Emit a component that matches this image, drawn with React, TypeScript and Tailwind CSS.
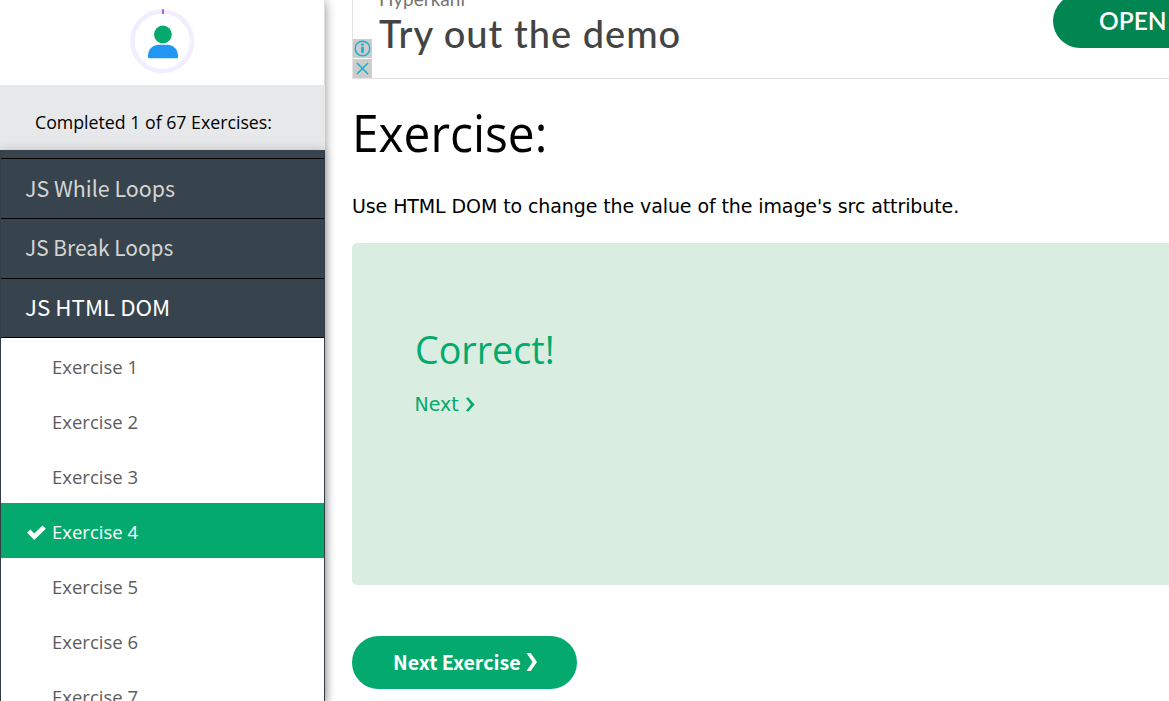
import type { ReactNode } from "react";

const sections = [
  { title: "JS While Loops", tone: "text-[#d5d5d5]", row: "h-[60px] pb-[2px]", scale: "scale-x-[0.974]" },
  { title: "JS Break Loops", tone: "text-[#d5d5d5]", row: "h-[60px] pb-[4px]", scale: "scale-x-[0.95]" },
  { title: "JS HTML DOM", tone: "text-white", row: "h-[59px] pb-[3px]", scale: "scale-x-[1.015]" },
];
const exercises = [1, 2, 3, 4, 5, 6, 7];

function Narrow({ children, className }: { children: ReactNode; className: string }) {
  return <span className={`inline-block origin-left whitespace-nowrap ${className}`}>{children}</span>;
}

function Chevron({ className, bold }: { className: string; bold?: boolean }) {
  return (
    <svg viewBox="0 0 11 18" className={className} fill="currentColor">
      <path d={bold ? "M0 0h4.200l6.300 9-6.300 9H0l6-9z" : "M0 1.500L2.500 0l8 9-8 9L0 16.500 6 9z"} />
    </svg>
  );
}

function Avatar() {
  return (
    <svg viewBox="0 0 66 66" className="h-[66px] w-[66px]">
      <circle cx="33.2" cy="33.3" r="29.8" fill="none" stroke="#f3eeff" strokeWidth="4.6" />
      <path d="M34 1.300v4.800" stroke="#9766f3" strokeWidth="2" />
      <circle cx="33.9" cy="26.500" r="8.900" fill="#04aa6d" />
      <path d="M19 49v-1c0-7 5-11.200 11-11.200h8c6 0 11 4.200 11 11.200v1q0 1.300-1.300 1.300H20.300q-1.300 0-1.300-1.300z" fill="#2196f3" />
    </svg>
  );
}

function Sidebar() {
  return (
    <aside className="relative z-10 flex w-[325px] shrink-0 flex-col bg-[#38444d] font-['Open_Sans',sans-serif] shadow-[0_2px_10px_rgba(0,0,0,0.45)]">
      <div className="flex h-[85px] shrink-0 justify-center border-r border-[#dedede] bg-white pt-2 pr-px">
        <Avatar />
      </div>
      <div className="flex h-[65px] shrink-0 items-center bg-[#e7e8ea] pt-[9px] pl-[35px] text-[18px] text-black">
        <Narrow className="scale-x-[0.985]">Completed 1 of 67 Exercises:</Narrow>
      </div>
      <nav className="mx-px flex flex-col pt-2 shadow-[0_0_10px_rgba(0,0,0,0.2)]">
        {sections.map((s) => (
          <div
            key={s.title}
            className={`flex shrink-0 items-center border-t border-black pl-[24px] font-['Noto_Sans_CJK_SC',sans-serif] text-[22px] ${s.row} ${s.tone}`}
          >
            <Narrow className={s.scale}>{s.title}</Narrow>
          </div>
        ))}
        <ul className="border-t border-black bg-white">
          {exercises.map((n) => (
            <li
              key={n}
              className={`flex h-[55px] items-center pt-[3px] text-[18.5px] ${n === 4 ? "bg-[#04aa6d] text-white" : "text-[#5c5c5c]"}`}
            >
              <span className="flex w-[51px] pl-[26px]">
                {n === 4 && (
                  <svg viewBox="0 0 19 15" className="h-[15px] w-[19px]" fill="none" stroke="currentColor" strokeWidth="4.600">
                    <path d="M1.700 6.200l5.500 5.500L17.200 2.100" strokeLinejoin="miter" />
                  </svg>
                )}
              </span>
              <span className="whitespace-nowrap">Exercise {n}</span>
            </li>
          ))}
        </ul>
      </nav>
    </aside>
  );
}

function AdBanner() {
  return (
    <div className="flex h-[79px] shrink-0 border-b border-l border-[#e3e3e3]">
      <div className="flex w-[19px] shrink-0 flex-col gap-px pt-[39px] text-[#0fb2d3]">
        <span className="flex h-[19px] items-center justify-center bg-[#cccccc]">
          <svg viewBox="0 0 19 19" className="h-[19px] w-[19px]" fill="none" stroke="currentColor">
            <circle cx="9.500" cy="9.500" r="7.300" strokeWidth="1.400" />
            <path d="M9.500 7.800v6M9.500 4.500v2" strokeWidth="2.600" />
          </svg>
        </span>
        <span className="flex h-[19px] items-center justify-center bg-[#cccccc]">
          <svg viewBox="0 0 19 19" className="h-[19px] w-[19px]" fill="none" stroke="currentColor" strokeWidth="1.500">
            <path d="M4 4l11 11M15 4L4 15" />
          </svg>
        </span>
      </div>
      <div className="flex flex-col pl-[7px] font-['Lato','Open_Sans',sans-serif]">
        <span className="-mt-[14px] h-[24px] text-[19px] leading-[26px] text-[#757575]">Hyperkani</span>
        <span className="text-[38px] leading-[46px] font-medium tracking-[1px] whitespace-nowrap text-[#444444]">Try out the demo</span>
      </div>
      <button className="-mt-[6px] ml-auto flex h-[54px] w-[116px] shrink-0 items-center rounded-l-full bg-[#018652] pl-[46px] font-['Lato',sans-serif] text-[24.5px] font-semibold text-white">
        OPEN
      </button>
    </div>
  );
}

export default function App() {
  return (
    <div className="flex h-[701px] w-[1169px] overflow-hidden bg-white">
      <Sidebar />
      <main className="flex min-w-0 flex-1 flex-col pl-[27px]">
        <AdBanner />
        <h1 className="mt-[17px] h-[72px] font-['Open_Sans',sans-serif] text-[52px] leading-[72px] text-black">
          <Narrow className="scale-x-[0.92]">Exercise:</Narrow>
        </h1>
        <p className="mt-[23px] h-[30px] font-['DejaVu_Sans',sans-serif] text-[19px] leading-[30px] tracking-[-0.1px] whitespace-nowrap text-black">
          Use HTML DOM to change the value of the image's src attribute.
        </p>
        <section className="mt-[22px] flex h-[342px] shrink-0 flex-col rounded-l-[5px] bg-[#d9ede1] pl-[62.5px] text-[#04aa6d]">
          <h2 className="mt-[79px] h-[54px] font-['Open_Sans',sans-serif] text-[38px] leading-[54px]">
            <Narrow className="scale-x-[0.99]">Correct!</Narrow>
          </h2>
          <a className="mt-[13px] flex h-[30px] items-center gap-[7px] font-['DejaVu_Sans',sans-serif] text-[19px]">
            Next
            <Chevron className="h-[15px] w-[9px]" />
          </a>
        </section>
        <button className="mt-[51px] flex h-[53px] w-[225px] shrink-0 items-center gap-[5px] rounded-full bg-[#04aa6d] pb-[2px] pl-[41px] font-['Noto_Sans_CJK_SC',sans-serif] text-[19.6px] font-bold whitespace-nowrap text-white">
          Next Exercise
          <Chevron bold className="h-[18px] w-[12px]" />
        </button>
      </main>
    </div>
  );
}
